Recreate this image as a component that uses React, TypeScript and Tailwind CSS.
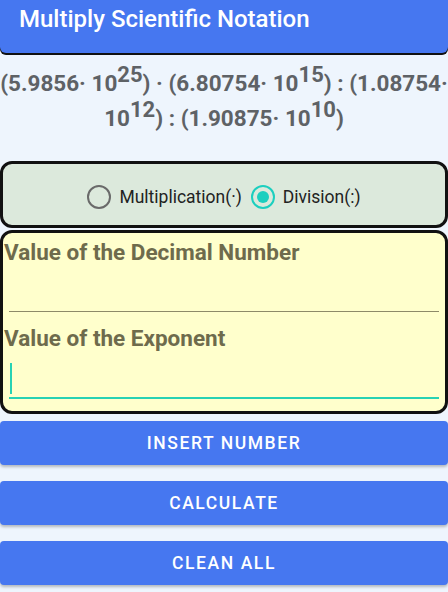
import React from "react";

const Pow = ({ base, exp }: { base: string; exp: string }) => (
  <>
    {base}
    <sup className="relative -top-[0.42em] align-baseline text-[22px]">{exp}</sup>
  </>
);

const ActionButton = ({ label }: { label: string }) => (
  <button className="h-[44px] w-full rounded-[4px] bg-[#4677f0] text-[17.5px] font-medium tracking-[0.09em] text-white shadow-[0_2px_3px_rgba(0,0,0,0.25)]">
    {label}
  </button>
);

export default function App() {
  return (
    <div className="h-[592px] w-[448px] overflow-hidden bg-[#eef5fd] font-['Roboto',sans-serif]">
      <div className="flex h-[53px] items-start rounded-b-[6px] bg-[#4677f0] px-[19px] pt-[3px] shadow-[0_2px_0_#111]">
        <h1 className="text-[24px] font-medium leading-[32px] text-white">
          Multiply Scientific Notation
        </h1>
      </div>

      <div className="mt-[13px] whitespace-nowrap text-center text-[22.5px] font-bold leading-[35px] text-[#5e6266]">
        <div>
          (5.9856· <Pow base="10" exp="25" />) · (6.80754· <Pow base="10" exp="15" />) : (1.08754·
        </div>
        <div>
          <Pow base="10" exp="12" />) : (1.90875· <Pow base="10" exp="10" />)
        </div>
      </div>

      <div className="mt-[25px] flex h-[67px] items-center justify-center gap-[9px] rounded-[12px] border-[3px] border-[#111] bg-[#dce9dc] pt-[5px]">
        <label className="flex items-center gap-[8px] text-[17.5px] text-[#222]">
          <span className="h-[24px] w-[24px] rounded-full border-[2px] border-[#6a6a6a]" />
          Multiplication(·)
        </label>
        <label className="flex items-center gap-[8px] text-[17.5px] text-[#222]">
          <span className="flex h-[24px] w-[24px] items-center justify-center rounded-full border-[2px] border-[#1ccfbf]">
            <span className="h-[12px] w-[12px] rounded-full bg-[#1ccfbf]" />
          </span>
          Division(:)
        </label>
      </div>

      <div className="mt-[2px] flex h-[184px] flex-col rounded-[12px] border-[3px] border-[#111] bg-[#ffffcc] pt-[5px]">
        <div className="pl-[1px] text-[22.5px] font-bold leading-[28px] text-[#6e6b4c]">
          Value of the Decimal Number
        </div>
        <div className="mx-[6px] mt-[45px] h-[1px] bg-[#8d8a68]" />
        <div className="mt-[12px] pl-[1px] text-[22.5px] font-bold leading-[28px] text-[#6e6b4c]">
          Value of the Exponent
        </div>
        <div className="mx-[6px] mt-[12px] flex h-[35px] items-end border-b-[2px] border-[#27d2b4] pb-[3px]">
          <span className="ml-[1px] h-[31px] w-[2px] bg-[#27d2b4]" />
        </div>
      </div>

      <div className="mt-[7px] flex flex-col gap-[16px]">
        <ActionButton label="INSERT NUMBER" />
        <ActionButton label="CALCULATE" />
        <ActionButton label="CLEAN ALL" />
      </div>
    </div>
  );
}
